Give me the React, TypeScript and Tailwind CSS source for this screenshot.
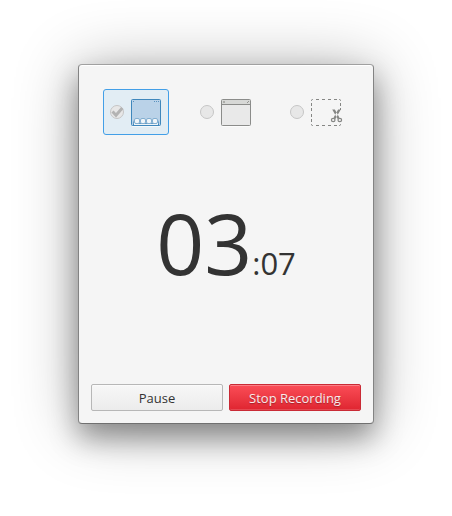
import type { ReactNode } from "react";

function ScreenIcon() {
  return (
    <svg width="30" height="28" viewBox="0 0 30 28" fill="none">
      <path d="M1 27.5H29" stroke="#fff" strokeOpacity=".6" />
      <rect x=".5" y=".5" width="29" height="26" rx="1" fill="#bad2e8" stroke="#3f87bc" />
      <path d="M2 2.5h1M23 2.5h1M25 2.5h1M27 2.5h1" stroke="#5b93c0" />
      <path d="M2.5 26.5V24.5L3.5 22V20.5h23V22l1 2.5v2z" fill="#eff5f9" />
      <path d="M2.5 26V24.5L3.5 21M27.5 26V24.5L26.5 21" stroke="#3f87bc" />
      <path d="M4 24.5h22" stroke="#5b98c5" />
      {[6, 12, 18, 24].map((x) => (
        <rect key={x} x={x - 2.5} y="19.5" width="5" height="5" rx="1.5" fill="#f0f5f9" stroke="#83afd1" />
      ))}
      <path d="M2 26.5h26" stroke="#3f87bc" />
    </svg>
  );
}

function WindowIcon() {
  return (
    <svg width="30" height="28" viewBox="0 0 30 28" fill="none">
      <path d="M1 27.5H29" stroke="#fff" strokeOpacity=".7" />
      <rect x=".5" y=".5" width="29" height="26" rx="1" fill="#e9e9e9" stroke="#8b8c8a" />
      <path d="M1 3h28" stroke="#d7d8d6" strokeWidth="4" />
      <path d="M1 5.5h28" stroke="#8b8c8a" />
      <path d="M2 3h2" stroke="#acada9" strokeWidth="2" />
      <path d="M26 3.5h1M27 2.5h1" stroke="#949592" />
    </svg>
  );
}

function SelectionIcon() {
  return (
    <svg width="32" height="28" viewBox="0 0 32 28" fill="none">
      <path
        d="M5 .5h3M11 .5h3M17 .5h3M23 .5h3M5 26.5h3M11 26.5h3M17 26.5h3M23 26.5h3M.5 4v3M.5 9v3M.5 15v3M.5 20v3M29.5 4v3M29.5 9v2M.5 2v-.5q0-1 1-1H2M28 .5h.5q1 0 1 1V2M.5 25v.5q0 1 1 1H2M28 26.5h.5q1 0 1-1V25"
        stroke="#858684"
      />
      <path d="M21.2 10.5l5.6 9.7 1.6-1.6-4.5-8zM29.8 10.5l-5.6 9.7-1.6-1.6L27.1 10.6z" fill="#858684" />
      <ellipse cx="22.2" cy="21" rx="1.8" ry="1.6" stroke="#858684" strokeWidth="1.2" />
      <ellipse cx="28.8" cy="21" rx="1.8" ry="1.6" stroke="#858684" strokeWidth="1.2" />
    </svg>
  );
}

function Option({ checked, children }: { checked?: boolean; children: ReactNode }) {
  return (
    <div
      className={
        checked
          ? "flex h-[46px] w-[66px] items-center gap-[7px] rounded-[3px] border border-[#439fe7] bg-[#e2edf4] pl-1.5"
          : "flex h-[46px] w-[66px] items-center gap-[7px] rounded-[3px] border border-transparent pl-1.5"
      }
    >
      <svg className="shrink-0" width="14" height="14" viewBox="0 0 14 14">
        <circle cx="7" cy="7" r="6.5" fill="#e7e7e7" stroke="#c5c5c5" />
        {checked && <path d="M2.5 6.5l3.5 3.7L12.3 3" fill="none" stroke="#b3b3b3" strokeWidth="3" />}
      </svg>
      <div className="mt-px shrink-0">{children}</div>
    </div>
  );
}

export default function App() {
  return (
    <main className="flex h-[516px] w-[452px] justify-center overflow-hidden bg-white pt-16 font-['Open_Sans',sans-serif] text-[#333]">
      <section className="flex h-[360px] w-[296px] flex-col rounded-[4px] border border-x-[#838383] border-t-[#a0a0a0] border-b-[#707070] bg-[#f5f5f5] px-3 pt-6 pb-3 shadow-[inset_0_1px_0_#fff,0_14px_28px_rgba(0,0,0,0.36),0_3px_64px_rgba(0,0,0,0.3)]">
        <div className="flex gap-6 pl-3">
          <Option checked>
            <ScreenIcon />
          </Option>
          <Option>
            <WindowIcon />
          </Option>
          <Option>
            <SelectionIcon />
          </Option>
        </div>
        <div className="flex flex-1 items-baseline justify-center pt-[50px] leading-none">
          <span className="text-[84px] leading-[116px]">03</span>
          <span className="text-[31px]">:07</span>
        </div>
        <div className="flex gap-1.5 text-[13px]">
          <button className="h-[27px] w-[132px] rounded-[2px] border border-[#b7b7b7] bg-linear-to-b from-[#f7f7f7] to-[#ececec] pt-[2px] shadow-[inset_0_1px_0_#fbfbfb]">
            Pause
          </button>
          <button className="h-[27px] w-[132px] rounded-[2px] border border-[#c92a35] bg-linear-to-b from-[#fb4c57] to-[#df2430] pt-[2px] text-white/90 shadow-[inset_0_1px_0_#fa7e85,inset_0_-1px_0_#e54952] [text-shadow:0_1px_1px_rgba(0,0,0,0.3)]">
            Stop Recording
          </button>
        </div>
      </section>
    </main>
  );
}
